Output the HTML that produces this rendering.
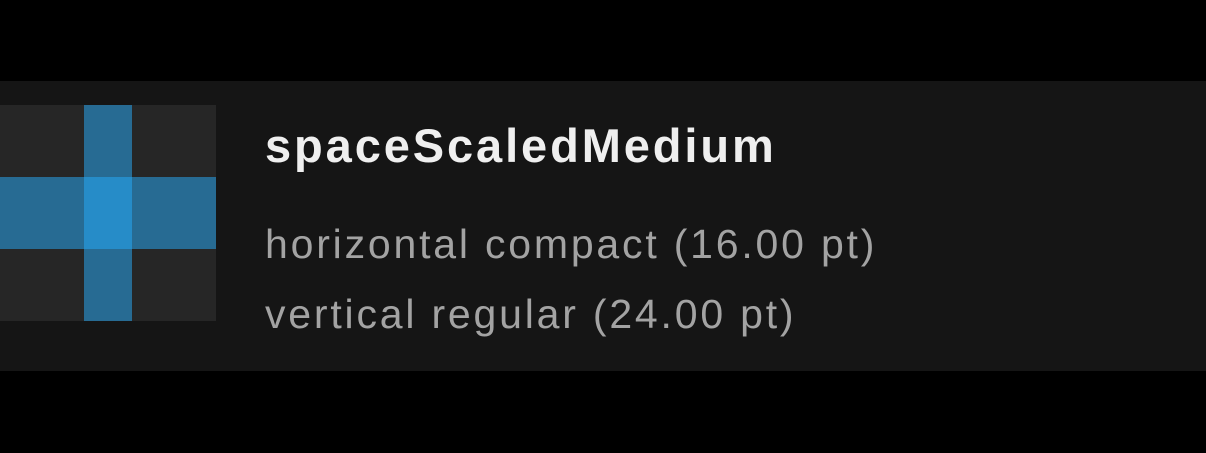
<!DOCTYPE html>
<html><head><style>
html,body{margin:0;padding:0;background:#000;width:1206px;height:453px;overflow:hidden}
.panel{position:absolute;left:0;top:81px;width:1206px;height:290px;background:#151515}
.c{position:absolute}
.t{position:absolute;left:265px;font-family:"Liberation Sans",sans-serif;white-space:nowrap;line-height:1}
</style></head><body>
<div class="panel"></div>
<div class="c" style="left:0;top:105px;width:216px;height:216px;background:#262626"></div>
<div class="c" style="left:84px;top:105px;width:48px;height:216px;background:#276b93"></div>
<div class="c" style="left:0;top:177px;width:216px;height:72px;background:#276b93"></div>
<div class="c" style="left:84px;top:177px;width:48px;height:72px;background:#268cc8"></div>
<div class="t" style="top:122px;font-size:47px;font-weight:bold;color:#efefef;letter-spacing:2.9px">spaceScaledMedium</div>
<div class="t" style="top:224px;font-size:41px;color:#a3a3a3;letter-spacing:2.8px">horizontal compact (16.00 pt)</div>
<div class="t" style="top:294px;font-size:41px;color:#a3a3a3;letter-spacing:2.8px">vertical regular (24.00 pt)</div>
</body></html>
